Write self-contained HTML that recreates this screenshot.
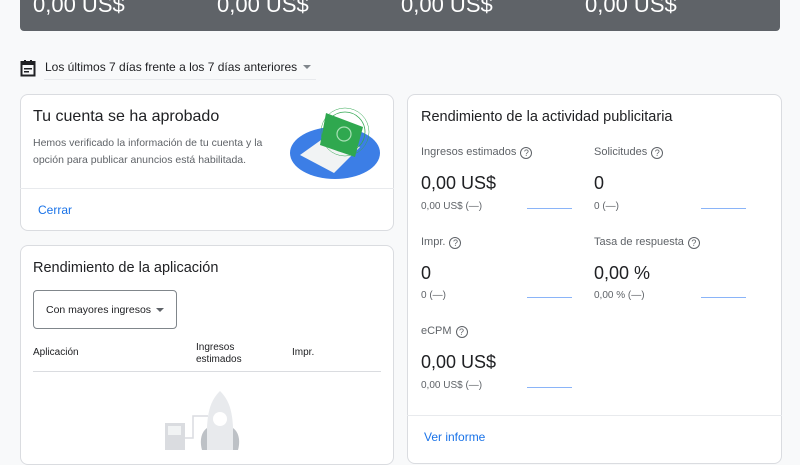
<!DOCTYPE html>
<html><head><meta charset="utf-8"><style>
*{margin:0;padding:0;box-sizing:border-box}
body{width:800px;height:450px;overflow:hidden;background:#f8f9fa;font-family:"Liberation Sans",Arial,sans-serif;color:#202124;position:relative}
.abs{position:absolute}
.banner{left:20px;top:-10px;width:760px;height:41px;background:#5f6368;border-radius:0 0 4px 4px}
.bv{top:-8px;font-size:22px;color:#fff}
.card{background:#fff;border:1px solid #dadce0;border-radius:8px}
.g{color:#5f6368}
.q{display:inline-block;width:12px;height:12px;border:1.3px solid #5f6368;border-radius:50%;font-size:9px;text-align:center;line-height:10px;vertical-align:-1px;margin-left:4px;color:#5f6368}
.lbl{font-size:11px;color:#5f6368}
.big{font-size:18px}
.sm{font-size:10px;color:#5f6368}
.ln{height:1px;background:#8ab4f8;width:45px}
</style></head><body>
<div class="abs banner"></div>
<div class="abs bv" style="left:33px">0,00 US$</div>
<div class="abs bv" style="left:217px">0,00 US$</div>
<div class="abs bv" style="left:401px">0,00 US$</div>
<div class="abs bv" style="left:585px">0,00 US$</div>

<svg class="abs" style="left:20px;top:59px" width="16" height="18" viewBox="0 0 16 18"><rect x="1.5" y="3" width="13" height="13.5" fill="none" stroke="#202124" stroke-width="2"/><rect x="1.5" y="3" width="13" height="3" fill="#202124"/><rect x="4" y="1" width="2" height="3" fill="#202124"/><rect x="10" y="1" width="2" height="3" fill="#202124"/><rect x="4" y="9" width="8" height="1.5" fill="#202124"/><rect x="4" y="12" width="5" height="1.5" fill="#202124"/></svg>
<div class="abs" style="left:45px;top:60px;font-size:12px">Los últimos 7 días frente a los 7 días anteriores</div>
<div class="abs" style="left:303px;top:65px;width:0;height:0;border-left:4px solid transparent;border-right:4px solid transparent;border-top:4px solid #80868b"></div>
<div class="abs" style="left:44px;top:79px;width:272px;height:1px;background:#e8eaed"></div>

<div class="abs card" style="left:20px;top:94px;width:374px;height:137px"></div>
<div class="abs" style="left:33px;top:108px;font-size:16px">Tu cuenta se ha aprobado</div>
<div class="abs g" style="left:33px;top:135px;font-size:10.5px;line-height:16.5px">Hemos verificado la información de tu cuenta y la<br>opción para publicar anuncios está habilitada.</div>
<svg class="abs" style="left:288px;top:105px" width="95" height="78" viewBox="0 0 95 78"><ellipse cx="47" cy="48" rx="45" ry="26" fill="#3c7ee6"/><path d="M12 50 L40 30 L72 42 L46 68 Z" fill="#f1f3f4"/><circle cx="57" cy="27" r="20" fill="none" stroke="#34a853" stroke-width="0.8"/><circle cx="57" cy="27" r="24" fill="none" stroke="#34a853" stroke-width="0.5"/><path d="M38 8 L75 22 L67 52 L32 40 Z" fill="#2fa84f"/><circle cx="56" cy="29" r="7" fill="none" stroke="#a8e0b5" stroke-width="1.2"/></svg>
<div class="abs" style="left:20px;top:188px;width:374px;height:1px;background:#e8eaed"></div>
<div class="abs" style="left:38px;top:203px;font-size:12px;color:#1a73e8">Cerrar</div>

<div class="abs card" style="left:20px;top:245px;width:374px;height:220px"></div>
<div class="abs" style="left:33px;top:260px;font-size:14.5px">Rendimiento de la aplicación</div>
<div class="abs" style="left:33px;top:290px;width:144px;height:39px;border:1px solid #80868b;border-radius:4px"></div>
<div class="abs" style="left:46px;top:304px;font-size:10.5px">Con mayores ingresos</div>
<div class="abs" style="left:156px;top:308px;border-left:4px solid transparent;border-right:4px solid transparent;border-top:4px solid #5f6368"></div>
<div class="abs" style="left:33px;top:347px;font-size:10px">Aplicación</div>
<div class="abs" style="left:196px;top:342px;font-size:10px;line-height:12px">Ingresos<br>estimados</div>
<div class="abs" style="left:292px;top:347px;font-size:10px">Impr.</div>
<div class="abs" style="left:33px;top:371px;width:348px;height:1px;background:#dadce0"></div>
<svg class="abs" style="left:160px;top:388px" width="90" height="62" viewBox="0 0 90 62"><path d="M60 3 C48 15 46 30 47 62 L73 62 C74 30 72 15 60 3Z" fill="#e8eaed"/><circle cx="60" cy="31" r="7" fill="#fff"/><path d="M47 40 C40 45 40 55 42 62 L47 62Z" fill="#bdc1c6"/><path d="M73 40 C80 45 80 55 78 62 L73 62Z" fill="#bdc1c6"/><rect x="5" y="35" width="20" height="27" fill="#dadce0"/><rect x="8" y="38" width="13" height="9" fill="#f1f3f4"/><path d="M25 50 L33 50 L33 28 L48 28" fill="none" stroke="#dadce0" stroke-width="1.5"/></svg>

<div class="abs card" style="left:407px;top:94px;width:375px;height:370px"></div>
<div class="abs" style="left:421px;top:109px;font-size:14.5px">Rendimiento de la actividad publicitaria</div>

<div class="abs lbl" style="left:421px;top:146px">Ingresos estimados<span class="q">?</span></div>
<div class="abs big" style="left:421px;top:173px">0,00 US$</div>
<div class="abs sm" style="left:421px;top:201px">0,00 US$ (—)</div>
<div class="abs ln" style="left:527px;top:208px"></div>
<div class="abs lbl" style="left:594px;top:146px">Solicitudes<span class="q">?</span></div>
<div class="abs big" style="left:594px;top:173px">0</div>
<div class="abs sm" style="left:594px;top:201px">0 (—)</div>
<div class="abs ln" style="left:701px;top:208px"></div>

<div class="abs lbl" style="left:421px;top:236px">Impr.<span class="q">?</span></div>
<div class="abs big" style="left:421px;top:263px">0</div>
<div class="abs sm" style="left:421px;top:290px">0 (—)</div>
<div class="abs ln" style="left:527px;top:297px"></div>
<div class="abs lbl" style="left:594px;top:236px">Tasa de respuesta<span class="q">?</span></div>
<div class="abs big" style="left:594px;top:263px">0,00 %</div>
<div class="abs sm" style="left:594px;top:290px">0,00 % (—)</div>
<div class="abs ln" style="left:701px;top:297px"></div>

<div class="abs lbl" style="left:421px;top:325px">eCPM<span class="q">?</span></div>
<div class="abs big" style="left:421px;top:352px">0,00 US$</div>
<div class="abs sm" style="left:421px;top:380px">0,00 US$ (—)</div>
<div class="abs ln" style="left:527px;top:387px"></div>

<div class="abs" style="left:407px;top:415px;width:375px;height:1px;background:#e8eaed"></div>
<div class="abs" style="left:424px;top:430px;font-size:12px;color:#1a73e8">Ver informe</div>
</body></html>
